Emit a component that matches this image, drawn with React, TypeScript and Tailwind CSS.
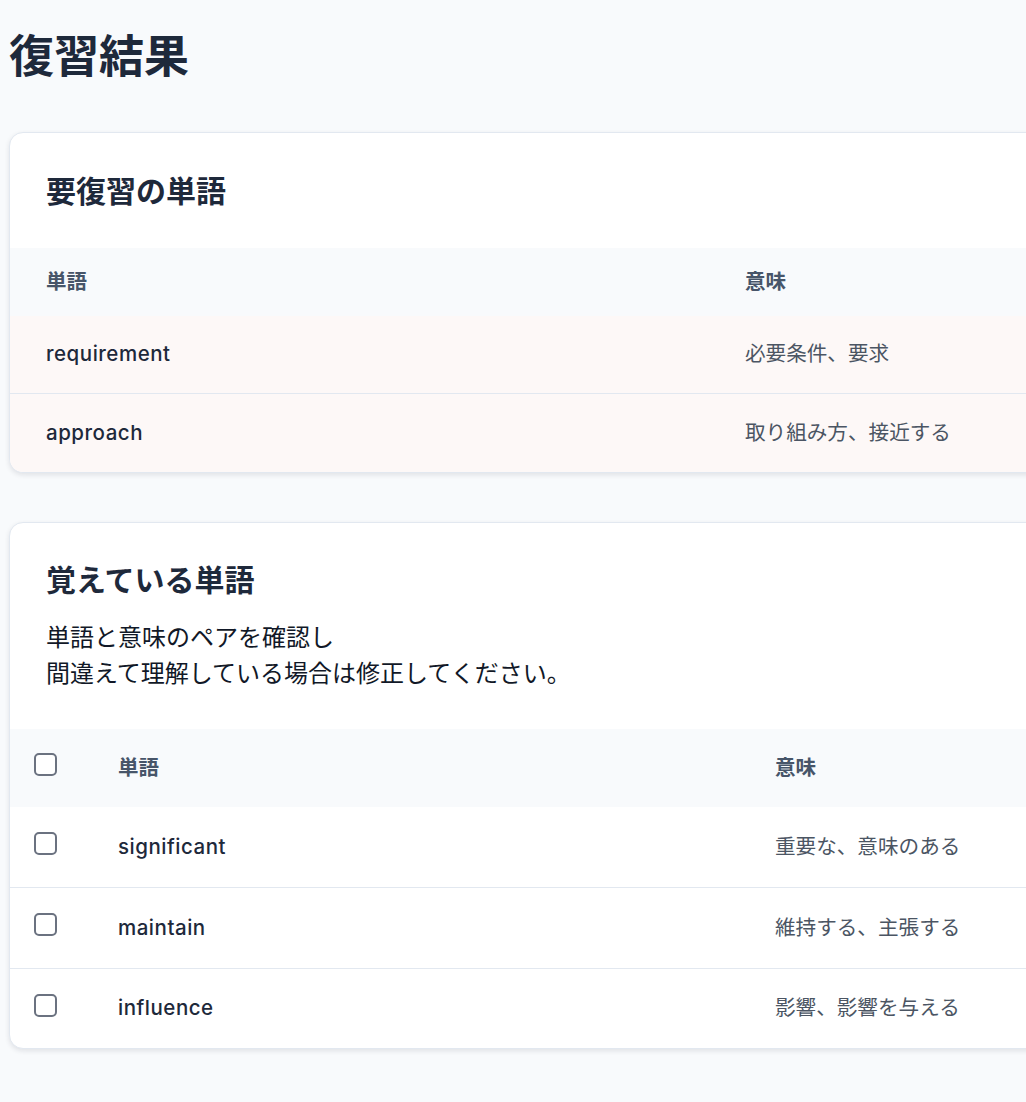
import React from "react";

const font = { fontFamily: 'Inter, "Noto Sans CJK JP", sans-serif' };

const reviewWords = [
  { word: "requirement", meaning: "必要条件、要求" },
  { word: "approach", meaning: "取り組み方、接近する" },
];

const knownWords = [
  { word: "significant", meaning: "重要な、意味のある" },
  { word: "maintain", meaning: "維持する、主張する" },
  { word: "influence", meaning: "影響、影響を与える" },
];

function Checkbox() {
  return (
    <input
      type="checkbox"
      className="appearance-none w-[23px] h-[23px] border-2 border-[#6b7280] rounded-[5px] bg-white mb-[7px] block"
    />
  );
}

export default function App() {
  return (
    <div
      className="min-h-screen w-full overflow-hidden bg-[#f8fafc] pt-[30px] pl-[9px] pb-[50px]"
      style={font}
    >
      <div className="w-[1200px]">
        <h1 className="text-[45px] font-bold leading-[54px] text-[#1e293b] m-0">復習結果</h1>

        <section className="mt-[48px] bg-white border border-[#e2e8f0] rounded-[14px] shadow-[0_2px_5px_rgba(15,23,42,0.10)] overflow-hidden">
          <div className="pt-[38px] pb-[37px] px-[36px]">
            <h2 className="text-[30px] font-bold leading-[40px] text-[#1e293b]">要復習の単語</h2>
          </div>
          <div className="flex items-center h-[68px] bg-[#f8fafc]">
            <div className="w-[735px] pl-[36px] text-[20.5px] font-semibold text-[#475569]">単語</div>
            <div className="flex-1 text-[20.5px] font-semibold text-[#475569]">意味</div>
          </div>
          {reviewWords.map((w, i) => (
            <div
              key={w.word}
              className={`flex items-center bg-[#fdf8f7] ${i > 0 ? "border-t border-[#e2e8f0] h-[79px]" : "h-[77px]"}`}
            >
              <div className="w-[735px] pl-[36px] text-[20.5px] tracking-[0.025em] font-medium text-[#1e293b]">{w.word}</div>
              <div className="flex-1 text-[20.6px] text-[#4b5563]">{w.meaning}</div>
            </div>
          ))}
        </section>

        <section className="mt-[49px] bg-white border border-[#e2e8f0] rounded-[14px] shadow-[0_2px_5px_rgba(15,23,42,0.10)] overflow-hidden">
          <div className="pt-[37px] pb-[37px] px-[36px]">
            <h2 className="text-[30px] font-bold leading-[40px] text-[#1e293b]">覚えている単語</h2>
            <p className="mt-[20px] text-[24px] leading-[36px] text-[#111827]">
              単語と意味のペアを確認し
              <br />
              間違えて理解している場合は修正してください。
            </p>
          </div>
          <div className="flex items-center h-[78px] bg-[#f8fafc]">
            <div className="w-[108px] pl-[24px]">
              <Checkbox />
            </div>
            <div className="w-[657px] text-[20.5px] font-semibold text-[#475569]">単語</div>
            <div className="flex-1 text-[20.5px] font-semibold text-[#475569]">意味</div>
          </div>
          {knownWords.map((w, i) => (
            <div
              key={w.word}
              className={`flex items-center ${i === 0 ? "h-[80px]" : i === 1 ? "border-t border-[#e2e8f0] h-[81px]" : "border-t border-[#e2e8f0] h-[80px]"}`}
            >
              <div className="w-[108px] pl-[24px]">
                <Checkbox />
              </div>
              <div className="w-[657px] text-[20.5px] tracking-[0.025em] font-medium text-[#1e293b]">{w.word}</div>
              <div className="flex-1 text-[20.6px] text-[#4b5563]">{w.meaning}</div>
            </div>
          ))}
        </section>
      </div>
    </div>
  );
}
